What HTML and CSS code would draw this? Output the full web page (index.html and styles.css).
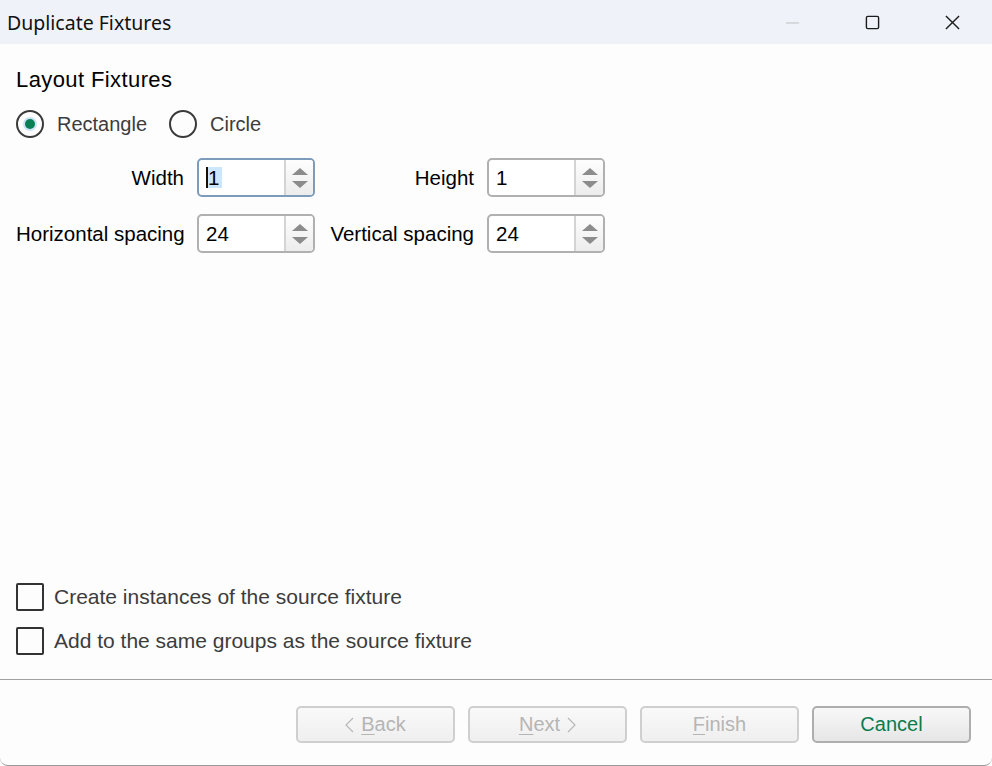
FILE: index.html
```html
<!DOCTYPE html>
<html>
<head>
<meta charset="utf-8">
<title>Duplicate Fixtures</title>
<link rel="stylesheet" href="styles.css">
</head>
<body>
    <div class="window">
        <!-- title bar begin -->
        <div class="titlebar">
            <span class="title">Duplicate Fixtures</span>
            <div class="controls">
                <span class="ctl ctl-min"><svg width="16" height="16" viewBox="0 0 16 16"><path d="M1 8.5h14" stroke="#c4c4c4" stroke-width="1.2"/></svg></span>
                <span class="ctl"><svg width="16" height="16" viewBox="0 0 16 16"><rect x="1.5" y="1.5" width="13" height="13" rx="1.5" fill="none" stroke="#1c1c1c" stroke-width="1.5"/></svg></span>
                <span class="ctl"><svg width="16" height="16" viewBox="0 0 16 16"><path d="M1 1l14 14M15 1L1 15" stroke="#1c1c1c" stroke-width="1.5"/></svg></span>
            </div>
        </div>
        <!-- title bar end -->

        <!-- content begin -->
        <div class="content">
            <h1 class="heading">Layout Fixtures</h1>
            <div class="radios">
                <label class="radio checked"><span class="dot"></span>Rectangle</label>
                <label class="radio"><span class="dot"></span>Circle</label>
            </div>
            <div class="fields">
                <span class="lbl">Width</span>
                <div class="spin focus"><span class="val"><i class="caret"></i><b class="sel">1</b></span><span class="arrows"><i class="up"></i><i class="down"></i></span></div>
                <span class="lbl">Height</span>
                <div class="spin"><span class="val">1</span><span class="arrows"><i class="up"></i><i class="down"></i></span></div>
                <span class="lbl">Horizontal spacing</span>
                <div class="spin"><span class="val">24</span><span class="arrows"><i class="up"></i><i class="down"></i></span></div>
                <span class="lbl">Vertical spacing</span>
                <div class="spin"><span class="val">24</span><span class="arrows"><i class="up"></i><i class="down"></i></span></div>
            </div>
            <div class="checks">
                <label class="check"><span class="box"></span>Create instances of the source fixture</label>
                <label class="check"><span class="box"></span>Add to the same groups as the source fixture</label>
            </div>
        </div>
        <!-- content end -->

        <!-- footer begin -->
        <div class="footer">
            <span class="btn disabled"><svg class="chev" width="9" height="16" viewBox="0 0 9 16"><path d="M8 1L1 8l7 7" fill="none" stroke="#b8b8b8" stroke-width="1.2"/></svg><u>B</u>ack</span>
            <span class="btn disabled"><u>N</u>ext<svg class="chev chev-r" width="9" height="16" viewBox="0 0 9 16"><path d="M1 1l7 7-7 7" fill="none" stroke="#b8b8b8" stroke-width="1.2"/></svg></span>
            <span class="btn disabled"><u>F</u>inish</span>
            <span class="btn cancel">Cancel</span>
        </div>
        <!-- footer end -->
    </div>
</body>
</html>
```

FILE: styles.css
```css
* { margin: 0; padding: 0; box-sizing: border-box; }
html, body { width: 992px; height: 766px; overflow: hidden; }
body { background: #fdfdfd; font-family: "Liberation Sans", Arial, sans-serif; font-size: 20.5px; color: #000; }

.window { height: 766px; display: flex; flex-direction: column; border-bottom: 1px solid #9a9a9a; border-radius: 0 0 8px 8px; }

/* title bar */
.titlebar { height: 44px; background: #eff3f9; display: flex; align-items: center; justify-content: space-between; padding-left: 7px; }
.title { font-family: "Noto Sans", sans-serif; font-size: 19.5px; color: #111; }
.controls { display: flex; height: 100%; }
.ctl { width: 80px; display: flex; align-items: center; justify-content: center; }
.ctl svg { width: 15px; height: 15px; }

/* content */
.content { flex: 1; display: flex; flex-direction: column; padding: 24px 16px 24px 16px; border-bottom: 1px solid #a0a0a0; }
.heading { font-size: 22px; font-weight: normal; line-height: 24px; letter-spacing: 0.4px; }

.radios { display: flex; gap: 22px; margin-top: 18px; height: 28px; align-items: center; font-size: 20px; }
.radio { display: flex; align-items: center; gap: 13px; color: #3c3c3c; }
.radio .dot { width: 28px; height: 28px; border: 2px solid #3a3a3a; border-radius: 50%; display: flex; align-items: center; justify-content: center; }
.radio.checked .dot::after { content: ""; width: 10px; height: 10px; border-radius: 50%; background: #0a7f55; box-shadow: 0 0 0 2px #c9e4f6; }

.fields { display: grid; grid-template-columns: 168px 118px 146px 118px; column-gap: 13px; row-gap: 17px; align-items: center; justify-content: start; margin-top: 20px; }
.lbl { text-align: right; white-space: nowrap; }
.spin { height: 39px; border: 2px solid #b0b0b0; border-radius: 5px; display: flex; background: #fff; }
.spin.focus { border-color: #7d9cbb; }
.val { flex: 1; padding-left: 7px; display: flex; align-items: center; }
.caret { display: inline-block; width: 2px; height: 21px; background: #1a0e00; }
.sel { font-weight: normal; background: #cce6fb; padding: 0 3px 0 0; line-height: 21px; }
.arrows { width: 29px; border-left: 2px solid #d4d4d4; display: flex; flex-direction: column; align-items: center; justify-content: center; gap: 6px; background: linear-gradient(#fefefe, #ececec); border-radius: 0 3px 3px 0; }
.arrows .up { width: 0; height: 0; border-left: 8px solid transparent; border-right: 8px solid transparent; border-bottom: 7px solid #8c8c8c; }
.arrows .down { width: 0; height: 0; border-left: 8px solid transparent; border-right: 8px solid transparent; border-top: 7px solid #8c8c8c; }

.checks { margin-top: auto; display: flex; flex-direction: column; gap: 16px; font-size: 21px; }
.check { display: flex; align-items: center; gap: 10px; color: #3c3c3c; height: 28px; }
.check .box { width: 28px; height: 28px; border: 2px solid #333; border-radius: 2px; }

/* footer */
.footer { height: 85px; display: flex; justify-content: flex-end; align-items: flex-start; gap: 13px; padding: 26px 21px 0 0; font-size: 20px; }
.btn { width: 159px; height: 37px; border: 2px solid #cfcfcf; border-radius: 5px; display: flex; align-items: center; justify-content: center; background: linear-gradient(#f9f9f9, #efefef); color: #b5b5b5; }
.btn u { text-decoration-thickness: 1px; text-underline-offset: 3px; }
.btn .chev { margin-right: 7px; }
.btn .chev-r { margin: 0 0 0 7px; }
.btn.cancel { border-color: #aeaeae; background: linear-gradient(#f8f8f8, #e6e6e6); color: #0a7c4c; }
```
